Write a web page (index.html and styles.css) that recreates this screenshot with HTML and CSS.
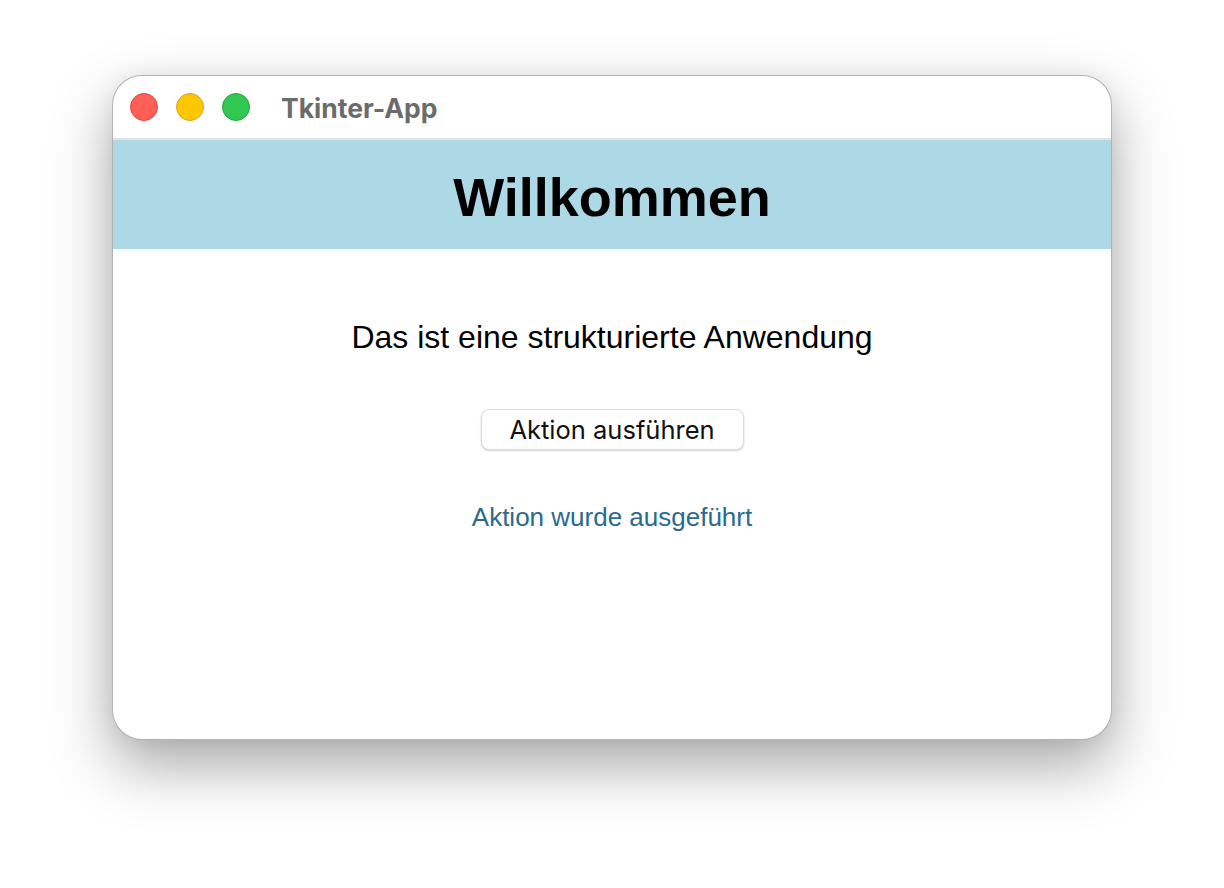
FILE: index.html
```html
<!DOCTYPE html>
<html lang="de">
<head>
<meta charset="utf-8">
<title>Tkinter-App</title>
<link rel="stylesheet" href="styles.css">
</head>
<body>
<div class="window">
  <div class="titlebar">
    <div class="lights">
      <span class="light red"></span>
      <span class="light yellow"></span>
      <span class="light green"></span>
    </div>
    <div class="title">Tkinter-App</div>
  </div>
  <div class="header">Willkommen</div>
  <div class="content">
    <div class="label">Das ist eine strukturierte Anwendung</div>
    <button class="btn">Aktion ausführen</button>
    <div class="status">Aktion wurde ausgeführt</div>
  </div>
</div>
</body>
</html>
```
FILE: styles.css
```css
html, body {
  margin: 0;
  padding: 0;
  background: #ffffff;
}
body {
  width: 1224px;
  height: 888px;
  overflow: hidden;
  font-family: "Liberation Sans", Arial, sans-serif;
}
.window {
  margin: 75px 0 0 112px;
  width: 1000px;
  height: 665px;
  box-sizing: border-box;
  border: 1px solid rgba(0,0,0,0.3);
  border-radius: 30px;
  background: #ffffff;
  overflow: hidden;
  box-shadow: 0 26px 60px rgba(0,0,0,0.34), 0 0 20px rgba(0,0,0,0.06);
  display: flex;
  flex-direction: column;
}
.titlebar {
  height: 62px;
  flex: none;
  display: flex;
  align-items: center;
  border-bottom: 2px solid #e3e3e3;
}
.lights {
  display: flex;
  gap: 18px;
  margin-left: 17px;
}
.light {
  width: 28px;
  height: 28px;
  border-radius: 50%;
  box-sizing: border-box;
}
.red { background: #ff5f57; border: 1px solid #e0443e; }
.yellow { background: #fdc700; border: 1px solid #dea123; }
.green { background: #32c753; border: 1px solid #1aab29; }
.title {
  margin-left: 31px;
  font-family: "Inter", "Liberation Sans", sans-serif;
  font-weight: 700;
  font-size: 26.5px;
  color: #6b6b6b;
  margin-top: 1px;
}
.header {
  height: 109px;
  flex: none;
  background: #add8e6;
  display: flex;
  align-items: center;
  justify-content: center;
  font-weight: 700;
  font-size: 54px;
  color: #000;
  padding-top: 4px;
  box-sizing: border-box;
}
.content {
  display: flex;
  flex-direction: column;
  align-items: center;
}
.label {
  margin-top: 70px;
  font-size: 32px;
  line-height: 37px;
  color: #000;
}
.btn {
  margin-top: 53px;
  width: 263px;
  height: 41px;
  background: #ffffff;
  border: 1px solid #dcdcdc;
  border-radius: 8px;
  box-shadow: 0 1px 2px rgba(0,0,0,0.18);
  font-family: "Inter", "Liberation Sans", sans-serif;
  font-size: 25.5px;
  color: #111;
  padding: 0;
}
.status {
  margin-top: 52px;
  font-size: 26px;
  line-height: 30px;
  color: #2b6a8e;
}
```
